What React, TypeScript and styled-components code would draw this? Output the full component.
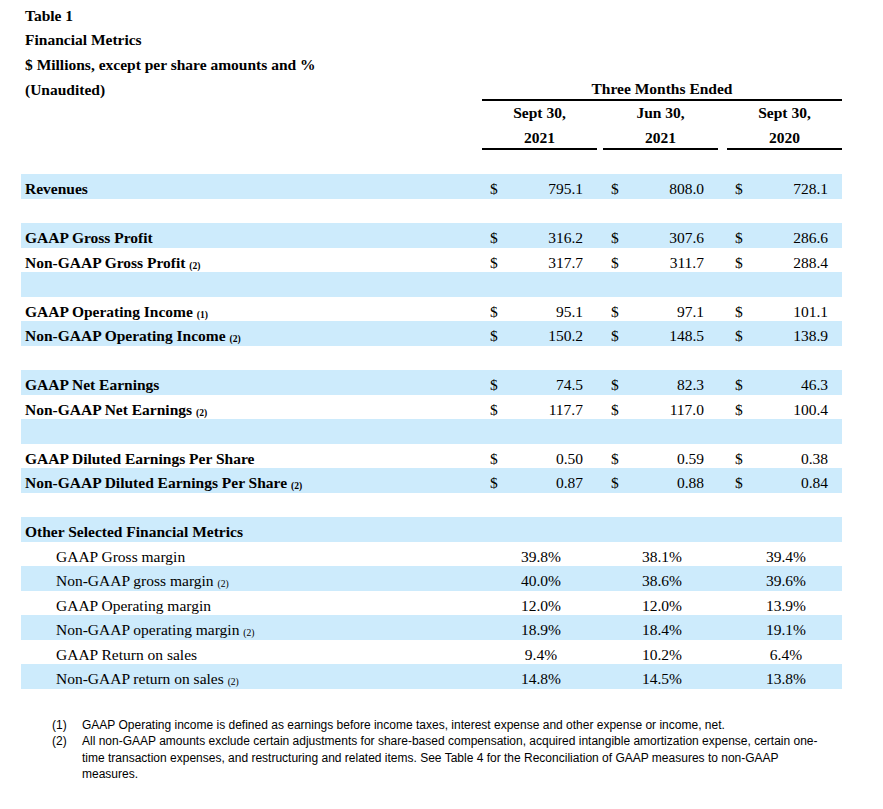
import React from "react";
import styled, { createGlobalStyle } from "styled-components";

const GlobalStyle = createGlobalStyle`
  html, body { margin: 0; padding: 0; background: #ffffff; }
  body { font-family: "Liberation Serif", "Times New Roman", serif; color: #000; }
`;

const Page = styled.div`
  padding: 2.5px 0 0 21px;
  width: 821px;
`;

const Table = styled.div`
  font-size: 15.5px;
  line-height: 17.6px;
`;

const Row = styled.div<{ $shaded?: boolean; $pb?: number }>`
  display: grid;
  grid-template-columns: 461px 121px 124px 115px;
  height: 24.5px;
  box-sizing: border-box;
  align-items: end;
  padding-bottom: ${(p) => (p.$pb ?? 0.5)}px;
  background: ${(p) => (p.$shaded ? "#cdebfc" : "transparent")};
`;

const Label = styled.div<{ $bold?: boolean; $indent?: boolean; $pb?: number }>`
  padding-left: ${(p) => (p.$indent ? 35 : 4)}px;
  padding-bottom: ${(p) => p.$pb ?? 0}px;
  font-weight: ${(p) => (p.$bold ? 700 : 400)};
  white-space: nowrap;
`;

const Note = styled.span`
  font-size: 9.6px;
  line-height: 1;
  vertical-align: -1px;
`;

const SpanHead = styled.div`
  grid-column: 2 / 5;
  text-align: center;
  font-weight: 700;
  border-bottom: 2px solid #000;
  padding-bottom: 0.9px;
`;

const ColHead = styled.div<{ $rule?: boolean }>`
  width: 115px;
  box-sizing: border-box;
  text-align: center;
  font-weight: 700;
  border-bottom: ${(p) => (p.$rule ? "2px solid #000" : "none")};
  padding-bottom: ${(p) => (p.$rule ? 0.6 : 0)}px;
`;

const Money = styled.div`
  width: 115px;
  box-sizing: border-box;
  display: flex;
  justify-content: space-between;
  padding: 0 14px 0 8px;
`;

const Pct = styled.div`
  width: 115px;
  box-sizing: border-box;
  text-align: center;
  padding-left: 3px;
`;

const Notes = styled.div`
  margin: 28.6px 0 0 31px;
  font-family: "Liberation Sans", Arial, sans-serif;
  font-size: 12px;
  line-height: 16.3px;
  color: #000;
`;

const NoteRow = styled.div`
  display: grid;
  grid-template-columns: 30px 745px;
`;

type Item =
  | { kind: "blank" }
  | { kind: "money"; label: string; note?: string; values: [string, string, string] }
  | { kind: "section"; label: string }
  | { kind: "pct"; label: string; note?: string; values: [string, string, string] };

const items: Item[] = [
  { kind: "money", label: "Revenues", values: ["795.1", "808.0", "728.1"] },
  { kind: "blank" },
  { kind: "money", label: "GAAP Gross Profit", values: ["316.2", "307.6", "286.6"] },
  { kind: "money", label: "Non-GAAP Gross Profit", note: "(2)", values: ["317.7", "311.7", "288.4"] },
  { kind: "blank" },
  { kind: "money", label: "GAAP Operating Income", note: "(1)", values: ["95.1", "97.1", "101.1"] },
  { kind: "money", label: "Non-GAAP Operating Income", note: "(2)", values: ["150.2", "148.5", "138.9"] },
  { kind: "blank" },
  { kind: "money", label: "GAAP Net Earnings", values: ["74.5", "82.3", "46.3"] },
  { kind: "money", label: "Non-GAAP Net Earnings", note: "(2)", values: ["117.7", "117.0", "100.4"] },
  { kind: "blank" },
  { kind: "money", label: "GAAP Diluted Earnings Per Share", values: ["0.50", "0.59", "0.38"] },
  { kind: "money", label: "Non-GAAP Diluted Earnings Per Share", note: "(2)", values: ["0.87", "0.88", "0.84"] },
  { kind: "blank" },
  { kind: "section", label: "Other Selected Financial Metrics" },
  { kind: "pct", label: "GAAP Gross margin", values: ["39.8%", "38.1%", "39.4%"] },
  { kind: "pct", label: "Non-GAAP gross margin", note: "(2)", values: ["40.0%", "38.6%", "39.6%"] },
  { kind: "pct", label: "GAAP Operating margin", values: ["12.0%", "12.0%", "13.9%"] },
  { kind: "pct", label: "Non-GAAP operating margin", note: "(2)", values: ["18.9%", "18.4%", "19.1%"] },
  { kind: "pct", label: "GAAP Return on sales", values: ["9.4%", "10.2%", "6.4%"] },
  { kind: "pct", label: "Non-GAAP return on sales", note: "(2)", values: ["14.8%", "14.5%", "13.8%"] },
];

function BodyRow({ item, shaded }: { item: Item; shaded: boolean }) {
  if (item.kind === "blank") return <Row $shaded={shaded} />;
  if (item.kind === "section")
    return (
      <Row $shaded={shaded}>
        <Label $bold>{item.label}</Label>
      </Row>
    );
  if (item.kind === "money")
    return (
      <Row $shaded={shaded}>
        <Label $bold>
          {item.label}
          {item.note && (
            <>
              {" "}
              <Note>{item.note}</Note>
            </>
          )}
        </Label>
        {item.values.map((v, i) => (
          <Money key={i}>
            <span>$</span>
            <span>{v}</span>
          </Money>
        ))}
      </Row>
    );
  return (
    <Row $shaded={shaded}>
      <Label $indent>
        {item.label}
        {item.note && (
          <>
            {" "}
            <Note>{item.note}</Note>
          </>
        )}
      </Label>
      {item.values.map((v, i) => (
        <Pct key={i}>{v}</Pct>
      ))}
    </Row>
  );
}

export default function App() {
  return (
    <>
      <GlobalStyle />
      <Page>
        <Table>
          <Row $pb={2.7}>
            <Label $bold>Table 1</Label>
          </Row>
          <Row $pb={2.7}>
            <Label $bold>Financial Metrics</Label>
          </Row>
          <Row $pb={2.7}>
            <Label $bold>$ Millions, except per share amounts and %</Label>
          </Row>
          <Row $pb={0}>
            <Label $bold $pb={1.9}>
              (Unaudited)
            </Label>
            <SpanHead>Three Months Ended</SpanHead>
          </Row>
          <Row $pb={3}>
            <div />
            <ColHead>Sept 30,</ColHead>
            <ColHead>Jun 30,</ColHead>
            <ColHead>Sept 30,</ColHead>
          </Row>
          <Row $pb={0}>
            <div />
            <ColHead $rule>2021</ColHead>
            <ColHead $rule>2021</ColHead>
            <ColHead $rule>2020</ColHead>
          </Row>
          <Row />
          {items.map((item, i) => (
            <BodyRow key={i} item={item} shaded={i % 2 === 0} />
          ))}
        </Table>
        <Notes>
          <NoteRow>
            <span>(1)</span>
            <span>
              GAAP Operating income is defined as earnings before income taxes, interest expense and other expense or
              income, net.
            </span>
          </NoteRow>
          <NoteRow>
            <span>(2)</span>
            <span>
              All non-GAAP amounts exclude certain adjustments for share-based compensation, acquired intangible
              amortization expense, certain one-time transaction expenses, and restructuring and related items. See
              Table 4 for the Reconciliation of GAAP measures to non-GAAP measures.
            </span>
          </NoteRow>
        </Notes>
      </Page>
    </>
  );
}
